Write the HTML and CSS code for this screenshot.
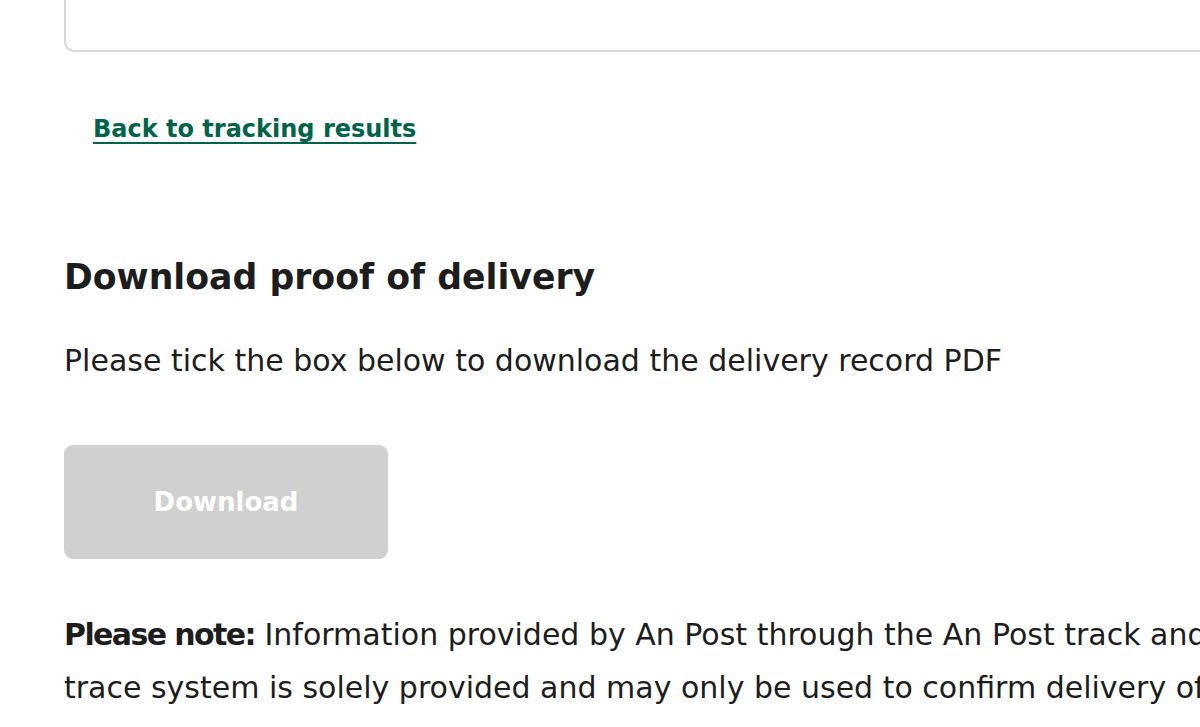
FILE: index.html
```html
<!DOCTYPE html>
<html lang="en">
<head>
<meta charset="utf-8">
<title>Download proof of delivery</title>
<link rel="stylesheet" href="styles.css">
</head>
<body>
<main class="page">
  <div class="card"></div>
  <a class="back-link" href="#">Back to tracking results</a>
  <section class="pod">
    <h2 class="pod-title">Download proof of delivery</h2>
    <p class="pod-intro">Please tick the box below to download the delivery record PDF</p>
    <button class="btn-download" type="button" disabled>Download</button>
    <p class="pod-note"><strong>Please note:</strong> Information provided by An Post through the An Post track and trace system is solely provided and may only be used to confirm delivery of items</p>
  </section>
</main>
</body>
</html>
```
FILE: styles.css
```css
html, body {
  margin: 0;
  padding: 0;
  background: #ffffff;
  overflow: hidden;
}
body {
  width: 1200px;
  height: 727px;
  font-family: "DejaVu Sans", sans-serif;
  color: #1d1d1d;
}
.page {
  padding-left: 64px;
}
.card {
  height: 90px;
  margin-top: -38px;
  width: 1300px;
  border: 2px solid #d9d9d9;
  border-radius: 10px;
  box-sizing: border-box;
  background: #fff;
}
.back-link {
  display: inline-block;
  margin-top: 62px;
  margin-left: 29px;
  font-size: 24px;
  font-weight: 700;
  color: #00634a;
  text-decoration: underline;
  text-decoration-thickness: 2px;
  text-underline-offset: 5px;
  line-height: 30px;
}
.pod-title {
  margin: 109px 0 0 0;
  font-size: 34.7px;
  font-weight: 700;
  line-height: 48px;
}
.pod-intro {
  margin: 40px 0 0 0;
  font-size: 30px;
  line-height: 40px;
}
.btn-download {
  display: block;
  margin-top: 64px;
  width: 324px;
  height: 114px;
  border: none;
  border-radius: 9px;
  background: #d0d0d0;
  color: #ffffff;
  font-family: inherit;
  font-size: 26px;
  font-weight: 700;
}
.pod-note {
  margin: 49px 0 0 0;
  font-size: 30px;
  line-height: 53px;
  width: 1180px;
}
.pod-note strong {
  font-weight: 700;
  letter-spacing: -1.6px;
}
```
